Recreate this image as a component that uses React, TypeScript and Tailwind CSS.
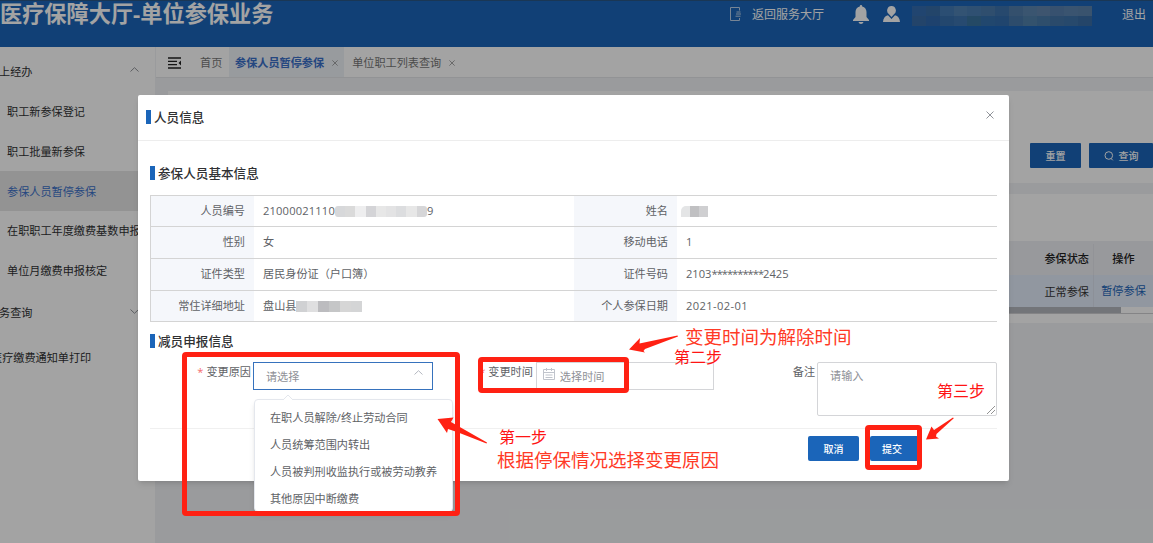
import React from "react";

const menu = [
  { text: "职工新参保登记" },
  { text: "职工批量新参保" },
  { text: "参保人员暂停参保", active: true },
  { text: "在职职工年度缴费基数申报" },
  { text: "单位月缴费申报核定" },
];

const reasons = [
  "在职人员解除/终止劳动合同",
  "人员统筹范围内转出",
  "人员被判刑收监执行或被劳动教养",
  "其他原因中断缴费",
];

const Chevron = ({ up = false, className = "" }: { up?: boolean; className?: string }) => (
  <svg viewBox="0 0 9 5" className={"h-[5px] w-[9px] " + className} fill="none" stroke="currentColor">
    <path d={up ? "M.5 4.5 4.5.7l4 3.8" : "M.5.5l4 3.8 4-3.8"} />
  </svg>
);

const Cross = ({ className }: { className: string }) => (
  <svg viewBox="0 0 8 8" className={className} fill="none" stroke="currentColor">
    <path d="M.5.5l7 7M7.5.5l-7 7" />
  </svg>
);

const Mosaic = ({ colors, className }: { colors: string[]; className: string }) => (
  <span className={"flex overflow-hidden " + className}>
    {colors.map((c, i) => (
      <span key={i} className="h-full flex-1" style={{ background: c }} />
    ))}
  </span>
);

const Header = () => (
  <header className="flex h-[47px] border-t border-[#2a5686] bg-[#1b65b9] text-white">
    <h1 className="w-[730px] text-[22.2px] leading-[26px] font-bold whitespace-nowrap">
      医疗保障大厅-单位参保业务
    </h1>
    <div className="flex h-[26px] w-[423px] items-center text-[12px] whitespace-nowrap">
      <svg viewBox="0 0 12 14" className="h-[14px] w-[12px] opacity-70" fill="none" stroke="white">
        <path d="M9.5 3.500V.5h-9v13h9V11M10.500 5h-4M6 7h5M5.500 9.200h5" />
      </svg>
      <span className="mt-px ml-[10px] w-[101px]">返回服务大厅</span>
      <svg viewBox="0 0 16 19" className="h-[19px] w-4" fill="white">
        <path d="M8 0c.8 0 1.200.6 1.200 1.400C12 2 13.500 4.200 13.500 7v5L16 15v1H0v-1l2.500-3V7C2.500 4.200 4 2 6.800 1.400 6.800.6 7.200 0 8 0zM5.500 17h5c-.4 1.300-1.300 2-2.500 2s-2.100-.7-2.500-2z" />
      </svg>
      <svg viewBox="0 0 18 17" className="ml-[14px] h-[17px] w-[18px]" fill="white">
        <path d="M8.500 0a4.300 4.500 0 0 1 2.500 8.200L8.500 11 6 8.200A4.300 4.500 0 0 1 8.500 0zM5 9.200 8.500 13 12 9.200c3 .8 4.800 3 5 6.800H0c.200-3.800 2-6 5-6.800z" />
      </svg>
      <div className="mt-[3px] ml-[11px] flex h-[20px] w-[180px] flex-col">
        <Mosaic className="h-[10px]" colors={["#346daf", "#386da6", "#447bb4", "#5083b5", "#4a7eb3", "#4a7bad", "#3d73ad", "#527dab", "#5b85b0", "#6286ae", "#577fae", "#5b84af", "#5982ad"]} />
        <Mosaic className="h-[10px]" colors={["#386ba6", "#3068ac", "#376fad", "#3d75b0", "#39729e", "#3570ad", "#336dac", "#4778a9", "#5180ab", "#487aaa", "#4274a8", "#3d72aa", "#396da5"]} />
      </div>
      <span className="mt-px ml-[30px]">退出</span>
    </div>
  </header>
);

const Sidebar = () => (
  <aside className="h-[496px] w-[155px] shrink-0 overflow-hidden bg-white text-[11.150px] whitespace-nowrap text-[#303133]">
    <div className="flex h-[45px] items-center pt-[6px]">
      <span className="-ml-px w-[131px]">上经办</span>
      <Chevron up className="-mt-[6px] text-[#909399]" />
    </div>
    {menu.map((m) => (
      <div
        key={m.text}
        className={"flex h-[39.600px] items-center pt-[2px] pl-[7px] " + (m.active ? "bg-[#e6e6e6] text-[#3a70c8]" : "")}
      >
        {m.text}
      </div>
    ))}
    <div className="flex h-[45px] items-center pt-[2px]">
      <span className="-ml-px w-[131px]">务查询</span>
      <Chevron className="-mt-1 text-[#909399]" />
    </div>
    <div className="-ml-[9px] flex h-[45px] items-center pt-[2px]">医疗缴费通知单打印</div>
  </aside>
);

const Tabs = () => (
  <nav className="flex h-[31px] items-center border-b border-[#e4e6ea] bg-white pl-3 text-[11.150px] whitespace-nowrap text-[#777]">
    <svg viewBox="0 0 13 12" className="mt-[2px] h-3 w-[13px]" fill="none" stroke="#222" strokeWidth="1.300">
      <path d="M0 1h13M0 4.300h9M0 7.700h9M0 11h13" />
      <path d="M13 3.500v5L10.500 6z" fill="#222" stroke="none" />
    </svg>
    <span className="mt-[2px] ml-[19px] w-[29px]">首页</span>
    <span className="flex h-full items-center bg-[#eef2f8] px-[6px] pt-[2px] font-bold text-[#3a70c8]">
      参保人员暂停参保
      <Cross className="ml-[8px] h-[6px] w-[6px] text-[#888]" />
    </span>
    <span className="mt-[2px] ml-[8px]">单位职工列表查询</span>
    <Cross className="mt-[2px] ml-[8px] h-[6px] w-[6px] text-[#888]" />
  </nav>
);

const Results = () => (
  <main className="ml-px min-w-0 flex-1 text-[11.150px] whitespace-nowrap">
    <Tabs />
    <section className="mt-[13px] ml-[12px] flex h-[92px] justify-end bg-white pt-[52px] text-[10px] font-medium text-white">
      <button className="h-[25px] w-[51px] rounded-[1px] bg-[#1b65b9] pt-px">重置</button>
      <button className="ml-2 flex h-[25px] w-[64px] items-center justify-center gap-[5px] rounded-[1px] bg-[#1b65b9] pt-px">
        <svg viewBox="0 0 10 10" className="h-[10px] w-[10px]" fill="none" stroke="white">
          <circle cx="4.800" cy="4.500" r="3.800" />
          <path d="M7 7.500l1.800 1.800" />
        </svg>
        查询
      </button>
    </section>
    <section className="mt-[11px] ml-[12px] h-[129px] bg-white pt-[47px]">
      <div className="flex h-[34px] items-center bg-[#eef0f5] pt-[3px] font-medium text-[#222]">
        <span className="ml-auto">参保状态</span>
        <span className="ml-1 flex h-full w-[60px] items-center justify-center border-l border-[#e5e7ec]">操作</span>
      </div>
      <div className="flex h-8 items-center bg-[#e3ecfa] text-[#333]">
        <span className="mt-[2px] ml-auto">正常参保</span>
        <span className="ml-1 flex h-full w-[60px] items-center justify-center border-l border-[#dbe2ee] text-[#1b65b9]">
          暂停参保
        </span>
      </div>
      <div className="flex h-[7px] border-b border-[#cfcfd2]">
        <div className="w-[953px] bg-[#b4b7bd]" />
        <div className="w-8 bg-white" />
      </div>
    </section>
  </main>
);

const SectionTitle = ({ text }: { text: string }) => (
  <div className="flex h-[14px] items-center gap-[3px] text-[12.600px] font-medium whitespace-nowrap text-[#303133]">
    <i className="h-[14px] w-[5px] bg-[#1b65b9]" />
    <span className="mt-[2px]">{text}</span>
  </div>
);

const Cell = ({ label, children }: { label: string; children: React.ReactNode }) => (
  <div className="flex w-1/2">
    <div className="flex w-[103px] items-center justify-end bg-[#f5f7fb] pr-[9px]">{label}</div>
    <div className="flex items-center pl-[9px]">{children}</div>
  </div>
);

const InfoTable = () => (
  <div className="mt-[15px] h-[127px] w-[847px] border-t border-l border-[#d4d4d4] text-[11.150px] text-[#606266]">
    <div className="flex h-[31px] border-b border-[#d4d4d4]">
      <Cell label="人员编号">
        <span className="tracking-[0.170px]">21000021110</span>
        <Mosaic className="h-[11px] w-[92px] rounded-[3px]" colors={["#d7d8da", "#dadada", "#eeeeef", "#d4d4d7", "#e7e7e7", "#e3e3e4", "#dcdddf", "#e7e7e7", "#d6d6d8"]} />
        <span>9</span>
      </Cell>
      <Cell label="姓名">
        <Mosaic className="-ml-[5px] h-[11px] w-[27px] rounded-tl-[5px]" colors={["#e4e5e6", "#c0c0c2", "#cfcfd1"]} />
      </Cell>
    </div>
    <div className="flex h-8 border-b border-[#d4d4d4]">
      <Cell label="性别">女</Cell>
      <Cell label="移动电话">1</Cell>
    </div>
    <div className="flex h-8 border-b border-[#d4d4d4]">
      <Cell label="证件类型">居民身份证（户口簿）</Cell>
      <Cell label="证件号码">
        2103<span className="tracking-[-0.980px]">**********</span>
        <span>2425</span>
      </Cell>
    </div>
    <div className="flex h-[31px] border-b border-[#d4d4d4]">
      <Cell label="常住详细地址">
        盘山县
        <Mosaic className="h-[11px] w-[66px]" colors={["#d0d1d3", "#dfdfe0", "#bcbcbf", "#c5c6c7", "#d6d6d6", "#d4d5d6"]} />
      </Cell>
      <Cell label="个人参保日期">
        <span className="tracking-[0.380px]">2021-02-01</span>
      </Cell>
    </div>
  </div>
);

const Dropdown = () => (
  <ul className="absolute top-[36px] left-0 z-10 h-[113px] w-[199px] rounded-sm border border-[#e4e7ed] bg-white pt-[5px] text-[11.150px] shadow-md">
    <svg viewBox="0 0 10 5" className="absolute -top-[5px] left-[28px] h-[5px] w-[10px]">
      <path d="M0 5l5-5 5 5" fill="white" stroke="#e4e7ed" />
    </svg>
    {reasons.map((r) => (
      <li key={r} className="flex h-[27px] items-center pl-[15px] whitespace-nowrap">
        {r}
      </li>
    ))}
  </ul>
);

const ReduceForm = () => (
  <div className="mt-[14px] flex h-[67px] border-b border-[#f0f0f0] text-[11.150px] whitespace-nowrap text-[#606266]">
    <label className="mr-[2px] ml-[46px] flex h-[21px] w-[55px] items-center justify-end gap-[3px]">
      <b className="font-normal text-[#f56c6c]">*</b>变更原因
    </label>
    <div className="relative flex h-[28px] w-[180px] items-center justify-between border border-[#3672bd] pr-[9px] pl-[12px]">
      <span className="mt-[2px] text-[#8f9197]">请选择</span>
      <Chevron up className="-mt-2 text-[#b4b8c0]" />
      <Dropdown />
    </div>
    <label className="mr-[3px] ml-[45px] flex h-[21px] w-[55px] items-center justify-end gap-[3px]">
      <b className="font-normal text-[#f56c6c]">*</b>变更时间
    </label>
    <div className="flex h-[28px] w-[178px] items-center border border-[#d4d5d8] pl-[6px] text-[#8f9197]">
      <svg viewBox="0 0 12 12" className="-mt-[5px] mr-[5px] h-3 w-3" fill="none" stroke="#c0c4cc">
        <path d="M.5 1.500h11v10H.5zM.5 4.500h11M3.500 0v3M8.500 0v3M2.500 7h7M2.500 9.500h7" />
      </svg>
      <span className="mt-[2px]">选择时间</span>
    </div>
    <label className="mr-[2px] ml-[79px] flex h-[21px] items-center">备注</label>
    <div className="relative h-[54px] w-[180px] rounded-[2px] border border-[#d4d5d8] pt-[5px] pl-[12px] text-[#8f9197]">
      请输入
      <svg viewBox="0 0 8 8" className="absolute right-px bottom-px h-2 w-2" stroke="#777" strokeWidth=".8">
        <path d="M0 8l8-8M4 8l4-4" />
      </svg>
    </div>
  </div>
);

const Modal = () => (
  <div className="mt-[95px] ml-[138px] h-[386px] w-[871px] rounded-[2px] bg-white shadow-md">
    <div className="flex h-[46px] justify-between border-b border-[#ededed] pt-[15px] pr-[15px] pl-2">
      <SectionTitle text="人员信息" />
      <Cross className="mt-[1px] h-2 w-2 text-[#909399]" />
    </div>
    <div className="pt-[25px] pl-[12px]">
      <SectionTitle text="参保人员基本信息" />
      <InfoTable />
      <div className="mt-[12px]">
        <SectionTitle text="减员申报信息" />
      </div>
      <div className="w-[847px]">
        <ReduceForm />
      </div>
    </div>
    <div className="mt-[7px] flex justify-end gap-[11px] pr-[89px] text-[10px] font-medium text-white">
      <button className="h-[25px] w-[51px] rounded-[2px] bg-[#1b65b9] pt-px">取消</button>
      <button className="h-[25px] w-[50px] rounded-[2px] bg-[#1b65b9] pt-px pr-[6px]">提交</button>
    </div>
  </div>
);

// hand-drawn guide marks lying over the whole page
const Guide = () => (
  <div className="absolute inset-0 z-20 whitespace-nowrap text-[#ff3a26]">
    <div className="absolute top-[352px] left-[182px] h-[164px] w-[278px] rounded-[4px] border-[5px] border-[#ff2113]" />
    <div className="absolute top-[357px] left-[478px] h-[36px] w-[151px] rounded-[4px] border-[5px] border-[#ff2113]" />
    <div className="absolute top-[425px] left-[865px] h-[45px] w-[57px] rounded-[4px] border-[5px] border-[#ff2113]" />
    <svg viewBox="0 0 1153 543" className="absolute inset-0 h-[543px] w-[1153px]" fill="#ff2113">
      <path d="M437.500 419l16-1.500-2.500 4.500 36 20.500-.5 1-29.500-11.500-9-3-1 4z" />
      <path d="M629 349.500l11-11.500-.5 5.500 38-8 .500 1-33 12.500-1.500 2 1.500 1.500z" />
      <path d="M926 439.500l5.500-13 2.500 3.500 19-12.500.8.800-17.300 15.700-.500 2.500 3 2z" />
    </svg>
    <span className="absolute top-[325px] left-[685px] text-[18.500px] leading-6">变更时间为解除时间</span>
    <span className="absolute top-[345px] left-[674px] text-[16px] leading-6 text-[#ff1414]">第二步</span>
    <span className="absolute top-[425px] left-[499px] text-[16px] leading-6 text-[#ff1414]">第一步</span>
    <span className="absolute top-[448px] left-[497px] text-[18.500px] leading-6">根据停保情况选择变更原因</span>
    <span className="absolute top-[379px] left-[937px] text-[16px] leading-6 text-[#ff1414]">第三步</span>
  </div>
);

const App = () => {
  return (
    <div className="relative h-[543px] w-[1153px] overflow-hidden bg-[#f1f3f6] font-['Open_Sans','Noto_Sans_CJK_SC',sans-serif]">
      <Header />
      <div className="flex">
        <Sidebar />
        <Results />
      </div>
      <div className="absolute inset-0 flex items-start bg-black/36">
        <Modal />
      </div>
      <Guide />
    </div>
  );
};

export default App;
